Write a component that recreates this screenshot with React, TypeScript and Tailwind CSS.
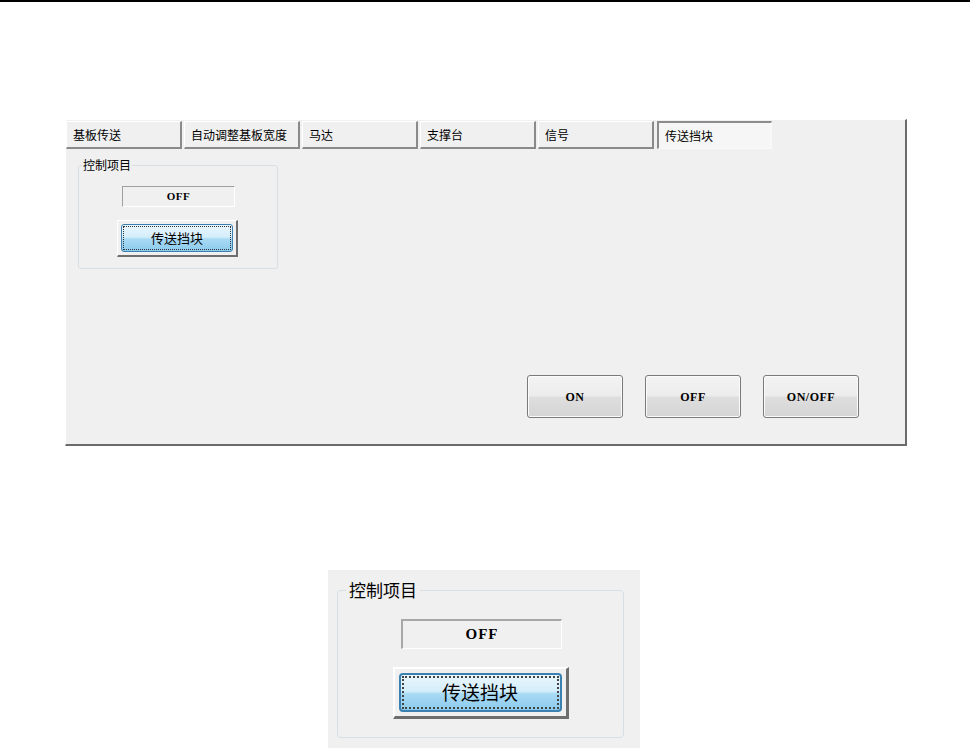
const tabs = ["基板传送", "自动调整基板宽度", "马达", "支撑台", "信号", "传送挡块"];

const cjk = { fontFamily: '"Noto Sans CJK SC", "Noto Sans", sans-serif' };
const serif = { fontFamily: '"Liberation Serif", "DejaVu Serif", serif' };

const Tab = ({ label, active }: { label: string; active?: boolean }) => (
  <div
    style={cjk}
    className={
      active
        ? "ml-[1px] flex h-[28px] w-[115px] items-center border-l-2 border-t-2 border-l-[#8c8c8c] border-t-[#8c8c8c] border-r border-b border-r-[#fafafa] border-b-[#fafafa] bg-[#f6f6f6] pl-[6px] text-[12px] text-black"
        : "flex h-[28px] w-[116px] items-center border-l border-t border-l-white border-t-white border-r-2 border-b-2 border-r-[#8a8a8a] border-b-[#8a8a8a] bg-[#f0f0f0] pl-[6px] text-[12px] text-black"
    }
  >
    {label}
  </div>
);

const GrayButton = ({ label }: { label: string }) => (
  <div className="h-[43px] w-[96px] rounded-[3px] border border-[#7a7a7a] bg-[linear-gradient(#f3f3f3_0%,#ececec_48%,#dedede_52%,#d4d4d4_100%)] shadow-[inset_0_0_0_1px_#fbfbfb]">
    <div style={serif} className="flex h-full items-center justify-center text-[12px] font-bold tracking-[0.5px] text-black">
      {label}
    </div>
  </div>
);

const SmallGroup = () => (
  <fieldset className="ml-[12px] mt-[8px] h-[112px] w-[200px] rounded-[3px] border border-[#d8dfe4]">
    <legend style={cjk} className="ml-[3px] px-[1px] text-[12px] leading-[16px] text-black">
      控制项目
    </legend>
    <div className="flex flex-col items-center pr-[1px]">
      <div
        style={serif}
        className="mt-[13px] ml-[2px] flex h-[21px] w-[113px] items-center justify-center border-l border-t border-l-[#a0a0a0] border-t-[#a0a0a0] border-r border-b border-r-white border-b-white text-[11px] font-bold tracking-[0.5px] text-black"
      >
        OFF
      </div>
      <div className="mt-[13px] h-[37px] w-[121px] border-l border-t border-l-white border-t-white border-r-2 border-b-2 border-r-[#6e6e6e] border-b-[#6e6e6e] p-[3px]">
        <div className="h-full w-full rounded-[3px] border border-[#3c7fb1] bg-[linear-gradient(#eaf6fd_0%,#d4eefb_46%,#a9daf4_54%,#8ccbed_100%)] p-[1px]">
          <div
            style={cjk}
            className="flex h-full w-full items-center justify-center border border-dotted border-[#333] text-[13px] text-black"
          >
            传送挡块
          </div>
        </div>
      </div>
    </div>
  </fieldset>
);

const BigGroup = () => (
  <fieldset className="ml-[9px] mt-[9px] h-[159px] w-[287px] rounded-[4px] border border-[#d8dfe4]">
    <legend style={cjk} className="ml-[8px] px-[3px] text-[17px] leading-[22px] text-black">
      控制项目
    </legend>
    <div className="flex flex-col items-center">
      <div
        style={serif}
        className="mt-[18px] ml-[2px] flex h-[30px] w-[161px] items-center justify-center border-l-2 border-t-2 border-l-[#a8a8a8] border-t-[#a8a8a8] border-r border-b border-r-white border-b-white text-[15px] font-bold tracking-[1px] text-black"
      >
        OFF
      </div>
      <div className="mt-[18px] h-[52px] w-[176px] border-l-2 border-t-2 border-l-white border-t-white border-r-[3px] border-b-[3px] border-r-[#6e6e6e] border-b-[#6e6e6e] p-[4px]">
        <div className="h-full w-full rounded-[4px] border-2 border-[#3c7fb1] bg-[linear-gradient(#eaf6fd_0%,#d4eefb_46%,#a9daf4_54%,#8ccbed_100%)] p-[1px]">
          <div
            style={cjk}
            className="flex h-full w-full items-center justify-center border-2 border-dotted border-[#444] text-[19px] text-black"
          >
            传送挡块
          </div>
        </div>
      </div>
    </div>
  </fieldset>
);

export default function App() {
  return (
    <div className="h-[748px] w-[970px] overflow-hidden bg-white">
      <div className="h-[2px] w-full bg-black" />

      <div className="ml-[65px] mt-[117px] flex h-[327px] w-[842px] flex-col border-l border-t border-l-white border-t-white border-r-2 border-b-2 border-r-[#6b6b6b] border-b-[#6b6b6b] bg-[#f0f0f0]">
        <div className="flex gap-[2px] pt-[1px]">
          {tabs.map((t, i) => (
            <Tab key={t} label={t} active={i === tabs.length - 1} />
          ))}
        </div>
        <SmallGroup />
        <div className="mt-auto flex justify-end gap-[22px] pb-[26px] pr-[46px]">
          <GrayButton label="ON" />
          <GrayButton label="OFF" />
          <GrayButton label="ON/OFF" />
        </div>
      </div>

      <div className="ml-[328px] mt-[124px] h-[178px] w-[312px] overflow-hidden bg-[#f0f0f0]">
        <BigGroup />
      </div>
    </div>
  );
}
